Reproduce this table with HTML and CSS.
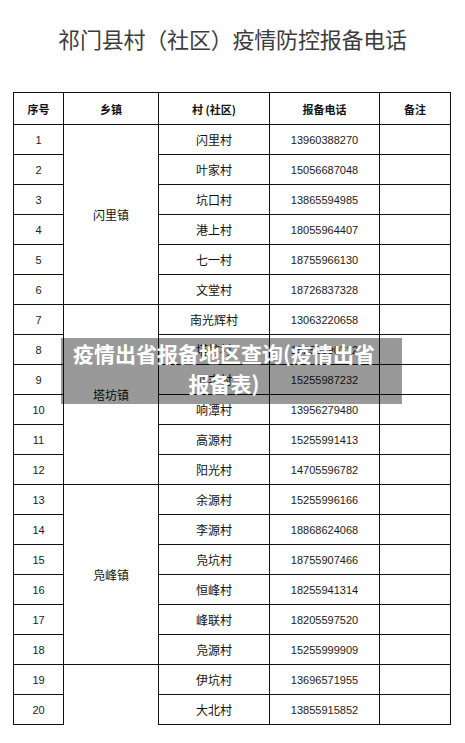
FILE: index.html
```html
<!DOCTYPE html>
<html lang="zh-CN">
<head>
<meta charset="utf-8">
<title>祁门县村（社区）疫情防控报备电话</title>
<link rel="stylesheet" href="styles.css">
</head>
<body>
<div class="page">
  <h1 class="title">祁门县村（社区）疫情防控报备电话</h1>
  <table class="sheet">
    <colgroup>
      <col class="c-no"><col class="c-town"><col class="c-vil"><col class="c-tel"><col class="c-note">
    </colgroup>
    <thead>
      <tr><th>序号</th><th>乡镇</th><th>村 (社区)</th><th>报备电话</th><th>备注</th></tr>
    </thead>
    <tbody>
      <tr><td class="num">1</td><td class="town" rowspan="6">闪里镇</td><td class="vil">闪里村</td><td class="num">13960388270</td><td></td></tr>
      <tr><td class="num">2</td><td class="vil">叶家村</td><td class="num">15056687048</td><td></td></tr>
      <tr><td class="num">3</td><td class="vil">坑口村</td><td class="num">13865594985</td><td></td></tr>
      <tr><td class="num">4</td><td class="vil">港上村</td><td class="num">18055964407</td><td></td></tr>
      <tr><td class="num">5</td><td class="vil">七一村</td><td class="num">18755966130</td><td></td></tr>
      <tr><td class="num">6</td><td class="vil">文堂村</td><td class="num">18726837328</td><td></td></tr>
      <tr><td class="num">7</td><td class="town" rowspan="6">塔坊镇</td><td class="vil">南光辉村</td><td class="num">13063220658</td><td></td></tr>
      <tr><td class="num">8</td><td class="vil">塔坊村</td><td class="num">15255990312</td><td></td></tr>
      <tr><td class="num">9</td><td class="vil">联丰村</td><td class="num">15255987232</td><td></td></tr>
      <tr><td class="num">10</td><td class="vil">响潭村</td><td class="num">13956279480</td><td></td></tr>
      <tr><td class="num">11</td><td class="vil">高源村</td><td class="num">15255991413</td><td></td></tr>
      <tr><td class="num">12</td><td class="vil">阳光村</td><td class="num">14705596782</td><td></td></tr>
      <tr><td class="num">13</td><td class="town" rowspan="6">凫峰镇</td><td class="vil">余源村</td><td class="num">15255996166</td><td></td></tr>
      <tr><td class="num">14</td><td class="vil">李源村</td><td class="num">18868624068</td><td></td></tr>
      <tr><td class="num">15</td><td class="vil">凫坑村</td><td class="num">18755907466</td><td></td></tr>
      <tr><td class="num">16</td><td class="vil">恒峰村</td><td class="num">18255941314</td><td></td></tr>
      <tr><td class="num">17</td><td class="vil">峰联村</td><td class="num">18205597520</td><td></td></tr>
      <tr><td class="num">18</td><td class="vil">凫源村</td><td class="num">15255999909</td><td></td></tr>
      <tr><td class="num">19</td><td class="town open" rowspan="2"></td><td class="vil">伊坑村</td><td class="num">13696571955</td><td></td></tr>
      <tr><td class="num">20</td><td class="vil">大北村</td><td class="num">13855915852</td><td></td></tr>
    </tbody>
  </table>
  <div class="caption">疫情出省报备地区查询(疫情出省报备表)</div>
</div>
</body>
</html>
```

FILE: styles.css
```css
html, body {
  margin: 0;
  padding: 0;
  background: #ffffff;
}

.page {
  position: relative;
  width: 465px;
  height: 743px;
  overflow: hidden;
}

.title {
  margin: 0;
  height: 92px;
  box-sizing: border-box;
  padding-top: 25px;
  line-height: 26px;
  font-family: "Noto Sans CJK SC", "Noto Sans", sans-serif;
  font-size: 22px;
  font-weight: 400;
  color: #3c3c3c;
  text-align: center;
  letter-spacing: -0.2px;
}

.sheet {
  margin-left: 13px;
  width: 437px;
  border-collapse: collapse;
  table-layout: fixed;
}

.c-no { width: 50px; }
.c-town { width: 95px; }
.c-vil { width: 111px; }
.c-tel { width: 110px; }
.c-note { width: 71px; }

.sheet th,
.sheet td {
  border: 1px solid #111;
  padding: 0;
  text-align: center;
  vertical-align: middle;
  color: #111;
}

.sheet th {
  height: 31px;
  font-family: "Noto Sans CJK SC", sans-serif;
  font-size: 11px;
  font-weight: 700;
}

.sheet td {
  height: 29px;
}

.sheet td.num {
  font-family: "Liberation Sans", Arial, sans-serif;
  font-size: 11px;
  color: #1a1a1a;
}

.sheet td.vil,
.sheet td.town {
  font-family: "Noto Sans CJK SC", sans-serif;
  font-size: 12px;
  color: #111;
}

.sheet td.open {
  border-bottom-style: none;
}

.caption {
  position: absolute;
  left: 61px;
  top: 338px;
  width: 341px;
  height: 66px;
  box-sizing: border-box;
  padding: 0 21px 6px 6px;
  background: rgba(0, 0, 0, 0.4);
  color: #ffffff;
  font-family: "Noto Sans CJK SC", sans-serif;
  font-size: 21px;
  font-weight: 700;
  line-height: 30px;
  text-align: center;
}
```
